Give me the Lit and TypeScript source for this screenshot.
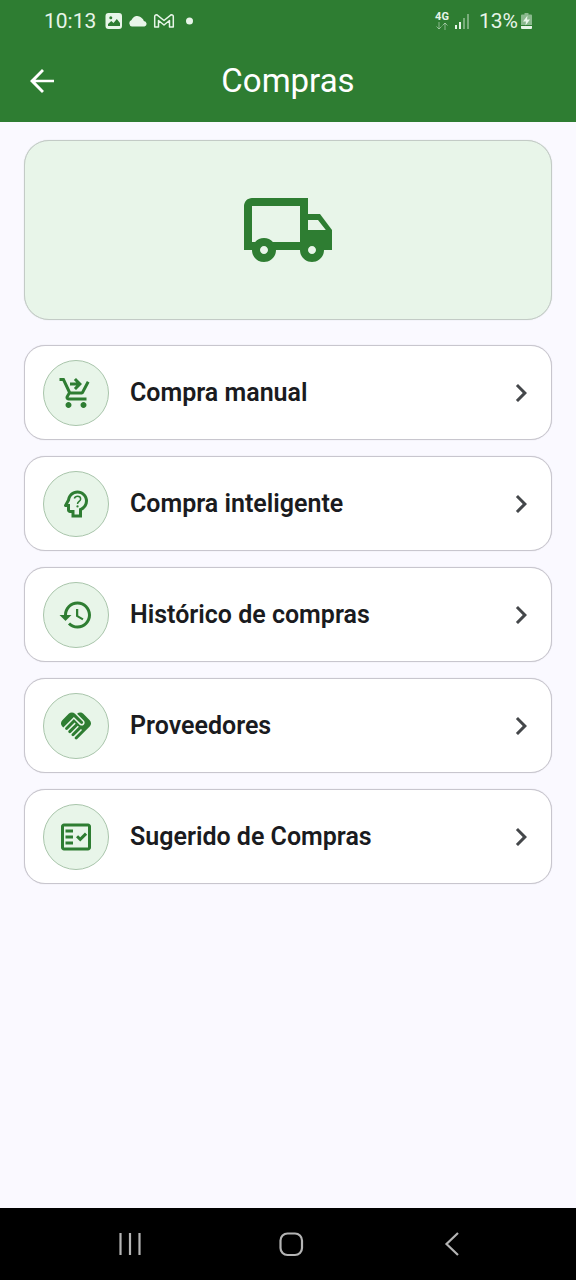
import { LitElement, html, css, svg, SVGTemplateResult } from "lit";
import { customElement } from "lit/decorators.js";

interface MenuOption {
  label: string;
  icon: SVGTemplateResult;
}

const OPTIONS: MenuOption[] = [
  {
    label: "Compra manual",
    icon: svg`<path d="M7 18c-1.1 0-1.99.9-1.99 2S5.9 22 7 22s2-.9 2-2-.9-2-2-2zM17 18c-1.1 0-1.99.9-1.99 2s.89 2 1.99 2 2-.9 2-2-.9-2-2-2zM8.1 13h7.45c.75 0 1.41-.41 1.75-1.03L21 4.96 19.25 4l-3.7 7H8.53L4.27 2H1v2h2l3.6 7.59-1.35 2.44C4.52 15.37 5.48 17 7 17h12v-2H7l1.1-2zM12 2l4 4-4 4-1.41-1.41L12.17 7H8V5h4.17l-1.59-1.59L12 2z"/>`,
  },
  {
    label: "Compra inteligente",
    icon: svg`<path d="M19.94 9.06C19.5 5.73 16.57 3 13 3 9.47 3 6.57 5.61 6.08 9l-1.93 3.48C3.74 13.14 4.22 14 5 14h1v2c0 1.1.9 2 2 2h1v3h7v-4.68c2.62-1.25 4.35-4.08 3.94-7.26zM14.89 14.63L14 15.05V19h-3v-3H8v-4H6.7l1.33-2.33C8.21 7.06 10.35 5 13 5c2.76 0 5 2.24 5 5 0 2.09-1.29 3.88-3.11 4.63z"/><path d="M10.9 8.3c.3-1 1.1-1.5 2.1-1.5 1.2 0 2.1.8 2.1 1.8 0 1.6-2.1 1.7-2.1 3.4" fill="none" stroke="currentColor" stroke-width="1"/><circle cx="13" cy="13.6" r=".75"/>`,
  },
  {
    label: "Histórico de compras",
    icon: svg`<path d="M13 3c-4.97 0-9 4.03-9 9H1l3.89 3.89.07.14L9 12H6c0-3.87 3.13-7 7-7s7 3.13 7 7-3.13 7-7 7c-1.93 0-3.68-.79-4.94-2.06l-1.42 1.42C8.27 19.99 10.51 21 13 21c4.97 0 9-4.03 9-9s-4.03-9-9-9zm-1 5v5l4.28 2.54.72-1.21-3.5-2.08V8H12z"/>`,
  },
  {
    label: "Proveedores",
    icon: svg`<path d="M16.48 10.41c-.39.39-1.04.39-1.43 0l-4.47-4.46-7.05 7.04-.66-.63c-1.17-1.17-1.17-3.07 0-4.24l4.24-4.24c1.17-1.17 3.07-1.17 4.24 0L16.48 9c.39.39.39 1.02 0 1.41zm.7-2.12c.78.78.78 2.05 0 2.83-1.27 1.27-2.61.22-2.83 0l-3.76-3.76-5.57 5.57c-.39.39-.39 1.02 0 1.41.39.39 1.02.39 1.42 0l4.62-4.62.71.71-4.62 4.62c-.39.39-.39 1.02 0 1.41.39.39 1.02.39 1.42 0l4.62-4.62.71.71-4.62 4.62c-.39.39-.39 1.02 0 1.41.39.39 1.02.39 1.41 0l4.62-4.62.71.71-4.62 4.62c-.39.39-.39 1.02 0 1.41.39.39 1.02.39 1.41 0l8.32-8.34c1.17-1.17 1.17-3.07 0-4.24l-4.24-4.24c-1.15-1.15-3.01-1.17-4.18-.06l4.47 4.47z"/>`,
  },
  {
    label: "Sugerido de Compras",
    icon: svg`<path d="M20 3H4c-1.1 0-2 .9-2 2v14c0 1.1.9 2 2 2h16c1.1 0 2-.9 2-2V5c0-1.1-.9-2-2-2zm0 16H4V5h16v14zM19.41 10.42L17.99 9l-3.17 3.17-1.41-1.42L12 12.16 14.82 15zM5 7h5v2H5zM5 11h5v2H5zM5 15h5v2H5z"/>`,
  },
];

@customElement("status-bar")
export class StatusBar extends LitElement {
  static styles = css`
    :host {
      display: flex;
      justify-content: space-between;
      align-items: center;
      height: 42px;
      padding: 0 43px 0 44px;
      color: #e8f5e9;
      font-size: 21px;
      line-height: 24px;
    }
    .group {
      display: flex;
      align-items: center;
      gap: 5px;
    }
    .time {
      margin-right: 4px;
    }
    .network {
      display: flex;
      flex-direction: column;
      align-items: center;
      font-size: 11px;
      font-weight: 700;
      line-height: 10px;
    }
    .battery {
      display: flex;
      align-items: center;
      gap: 2px;
      margin-left: 3px;
    }
    svg {
      display: block;
      fill: currentColor;
    }
  `;

  render() {
    return html`
      <div class="group">
        <span class="time">10:13</span>
        <svg width="18" height="18" viewBox="0 0 18 18" aria-hidden="true">
          <path fill-rule="evenodd" d="M3.500 1h10.500a3 3 0 0 1 3 3v10a3 3 0 0 1-3 3H3.500a3 3 0 0 1-3-3V4a3 3 0 0 1 3-3zM3 14h12v-3l-3.200-4L8.500 11 6.300 9 3 12zM5.800 4.200a1.500 1.500 0 1 0 0 3 1.500 1.500 0 0 0 0-3z"/>
        </svg>
        <svg width="20" height="18" viewBox="0 0 20 18" aria-hidden="true">
          <path d="M4 14.500a3.400 3.400 0 0 1-.5-6.500A6.200 6.200 0 0 1 14 6.200a4 4 0 0 1 1.800 2.800A2.800 2.800 0 0 1 16.500 14.500z"/>
        </svg>
        <svg width="22" height="18" viewBox="0 0 22 18" aria-hidden="true">
          <path d="M1.700 4.500Q1.700 2.700 3.700 2.700L11 8.500 18.300 2.700Q20.300 2.700 20.300 4.500V15H16.500V8.500L11 13 5.500 8.500V15H1.700z" fill="none" stroke="currentColor" stroke-width="1.500" stroke-linejoin="round"/>
        </svg>
        <svg width="20" height="18" viewBox="0 0 20 18" aria-hidden="true"><circle cx="9.500" cy="9" r="3.500"/></svg>
      </div>
      <div class="group">
        <span class="network">
          4G
          <svg width="14" height="8" viewBox="0 0 14 8" aria-hidden="true">
            <path d="M4 0v7M1.500 4.500L4 7l2.500-2.500M10 8V1M7.500 3.500L10 1l2.500 2.500" fill="none" stroke="currentColor" stroke-opacity=".5"/>
          </svg>
        </span>
        <svg width="17" height="18" viewBox="0 0 17 18" aria-hidden="true">
          <path d="M1 13h2v4H1zM5 10h2v7H5z"/>
          <path d="M9 6h2v11H9zM13 2h2v15h-2z" opacity=".4"/>
        </svg>
        <span class="battery">
          13%
          <svg width="13" height="18" viewBox="0 0 13 18" aria-hidden="true">
            <path d="M4.500 1h4v1.500H11q1 0 1 1V13H1V3.500q0-1 1-1h2.500z" opacity=".5"/>
            <path d="M1 14h11v2q0 1-1 1H2q-1 0-1-1zM7.500 3.500L3 9.500h3l-.5 4L10 7.500H7z"/>
          </svg>
        </span>
      </div>
    `;
  }
}

@customElement("menu-card")
export class MenuCard extends LitElement {
  static properties = {
    label: {},
    icon: { attribute: false },
  };
  declare label: string;
  declare icon: SVGTemplateResult;

  static styles = css`
    :host {
      display: block;
    }
    .card {
      display: flex;
      align-items: center;
      box-sizing: border-box;
      width: 100%;
      min-height: 95px;
      padding: 13px 12px 13px 18px;
      border: 1px solid #c8c6ce;
      border-radius: 21px;
      background: #ffffff;
      box-shadow: 0 0 1px #c8c6ce;
      color: #1a1b20;
      font: 600 25px/32px Roboto, sans-serif;
      text-align: left;
      cursor: pointer;
    }
    .badge {
      display: grid;
      place-items: center;
      flex: none;
      box-sizing: border-box;
      width: 66px;
      height: 66px;
      border: 1px solid #a9c5ab;
      border-radius: 50%;
      background: #e8f5e9;
      color: #2e7d32;
    }
    .label {
      flex: 1;
      margin-left: 21px;
    }
    svg {
      display: block;
      width: 36px;
      height: 36px;
      fill: currentColor;
    }
    .chevron {
      flex: none;
      color: #44474a;
    }
  `;

  render() {
    return html`
      <button class="card" type="button">
        <span class="badge"><svg viewBox="0 0 24 24" aria-hidden="true">${this.icon}</svg></span>
        <span class="label">${this.label}</span>
        <svg class="chevron" viewBox="0 0 24 24" aria-hidden="true">
          <path d="M10 6L8.590 7.410 13.170 12l-4.580 4.590L10 18l6-6z"/>
        </svg>
      </button>
    `;
  }
}

@customElement("app-root")
export class AppRoot extends LitElement {
  static styles = css`
    :host {
      display: flex;
      flex-direction: column;
      min-height: 100vh;
      background: #faf9ff;
      font-family: Roboto, sans-serif;
    }
    .top {
      background: #2e7d32;
      color: #ffffff;
    }
    .bar {
      display: grid;
      grid-template-columns: 36px 1fr 36px;
      align-items: center;
      height: 80px;
      padding: 0 24px 3px;
      box-sizing: border-box;
    }
    .title {
      margin: 0;
      font-size: 33px;
      font-weight: 400;
      line-height: 42px;
      text-align: center;
    }
    button {
      display: grid;
      place-items: center;
      padding: 0;
      border: 0;
      background: none;
      color: inherit;
      cursor: pointer;
    }
    svg {
      display: block;
    }
    .content {
      flex: 1;
      padding: 18px 24px 24px;
    }
    .hero {
      display: grid;
      place-items: center;
      box-sizing: border-box;
      min-height: 180px;
      border: 1px solid #c3cbc6;
      border-radius: 25px;
      background: #e8f5e9;
      box-shadow: 0 0 1px #c3cbc6;
      color: #2e7d32;
    }
    .menu {
      display: flex;
      flex-direction: column;
      gap: 16px;
      margin: 25px 0 0;
      padding: 0;
      list-style: none;
    }
    .system {
      display: flex;
      justify-content: space-around;
      align-items: center;
      height: 72px;
      padding: 0 43px 0 49px;
      background: #000000;
      color: #b4b4b4;
    }
  `;

  render() {
    return html`
      <header class="top">
        <status-bar></status-bar>
        <div class="bar">
          <button type="button" aria-label="Volver">
            <svg width="36" height="36" viewBox="0 0 24 24" fill="currentColor" aria-hidden="true">
              <path d="M20 11.100H7.630l5.690-5.690L12 4l-8 8 8 8 1.320-1.410L7.630 12.900H20z"/>
            </svg>
          </button>
          <h1 class="title">Compras</h1>
        </div>
      </header>
      <main class="content">
        <div class="hero">
          <svg width="96" height="96" viewBox="0 0 24 24" fill="currentColor" aria-hidden="true">
            <path d="M20 8h-3V4H3c-1.100 0-2 .9-2 2v11h2c0 1.660 1.340 3 3 3s3-1.340 3-3h6c0 1.660 1.340 3 3 3s3-1.340 3-3h2v-5l-3-4zm-.5 1.500l1.960 2.500H17V9.500h2.500zM6 18c-.55 0-1-.45-1-1s.45-1 1-1 1 .45 1 1-.45 1-1 1zm2.220-3c-.55-.61-1.330-1-2.220-1s-1.670.39-2.220 1H3V6h12v9H8.220zM18 18c-.55 0-1-.45-1-1s.45-1 1-1 1 .45 1 1-.45 1-1 1z"/>
          </svg>
        </div>
        <ul class="menu">
          ${OPTIONS.map(
            (o) => html`<li><menu-card .label=${o.label} .icon=${o.icon}></menu-card></li>`
          )}
        </ul>
      </main>
      <nav class="system" aria-label="Sistema">
        <button type="button" aria-label="Recientes">
          <svg width="28" height="28" viewBox="0 0 28 28" fill="none" stroke="currentColor" stroke-width="2.200" aria-hidden="true">
            <path d="M4.500 3v22M14 3v22M23.500 3v22"/>
          </svg>
        </button>
        <button type="button" aria-label="Inicio">
          <svg width="28" height="28" viewBox="0 0 28 28" fill="none" stroke="currentColor" stroke-width="2.200" aria-hidden="true">
            <rect x="3.500" y="3.500" width="21.500" height="21.500" rx="7"/>
          </svg>
        </button>
        <button type="button" aria-label="Atrás">
          <svg width="28" height="28" viewBox="0 0 28 28" fill="none" stroke="currentColor" stroke-width="2.200" aria-hidden="true">
            <path d="M20 3L8.500 14 20 25"/>
          </svg>
        </button>
      </nav>
    `;
  }
}
